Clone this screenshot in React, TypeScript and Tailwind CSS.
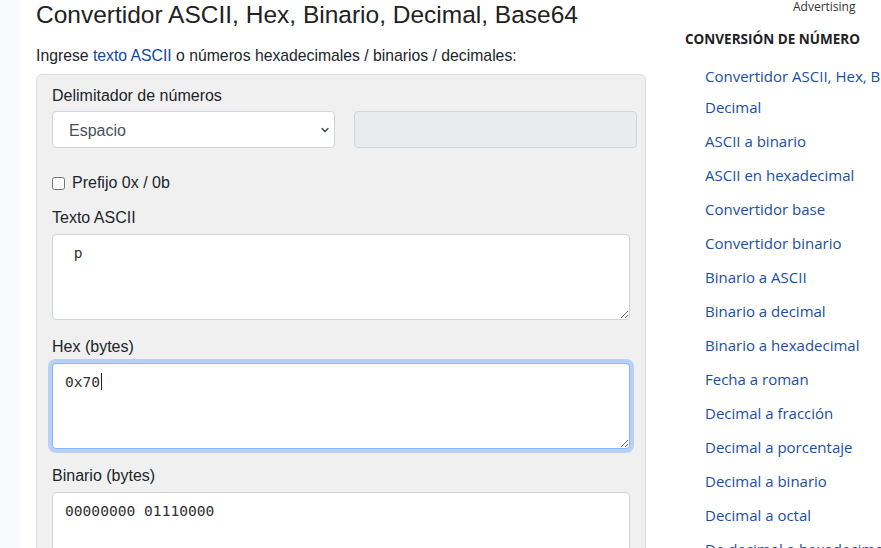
import React from 'react';

const links = [
  'Decimal',
  'ASCII a binario',
  'ASCII en hexadecimal',
  'Convertidor base',
  'Convertidor binario',
  'Binario a ASCII',
  'Binario a decimal',
  'Binario a hexadecimal',
  'Fecha a roman',
  'Decimal a fracción',
  'Decimal a porcentaje',
  'Decimal a binario',
  'Decimal a octal',
  'De decimal a hexadecimal',
];

const mono = "font-['DejaVu_Sans_Mono',monospace] text-[14.6px]";

const Field = ({ label, value, focused }: { label: string; value: string; focused?: boolean }) => (
  <div className="mb-[15px]">
    <label className="block h-[24px] leading-[24px] mb-[4px]">{label}</label>
    <div className="relative">
      <textarea
        readOnly
        defaultValue={value}
        className={
          'block w-full h-[86px] rounded-[4px] bg-white px-[12px] py-[6px] leading-[24px] text-[#333] outline-none resize-y ' +
          mono +
          (focused
            ? ' border border-[#86b7fe] shadow-[0_0_0_4px_rgba(13,110,253,0.25)]'
            : ' border border-[#ced4da]')
        }
      />
      {focused && <span className="absolute left-[49px] top-[10px] w-px h-[17px] bg-[#222]" />}
    </div>
  </div>
);

const App: React.FC = () => {
  return (
    <div className="w-[881px] h-[548px] overflow-hidden flex bg-white text-[#212529] font-['Liberation_Sans',Arial,sans-serif]">
      <div className="w-[20px] shrink-0 bg-[#f8f9fc]" />

      <main className="w-[626px] shrink-0 pl-[16px]">
        <h1 className="text-[24.5px] leading-[29px] font-normal text-[#222]">
          Convertidor ASCII, Hex, Binario, Decimal, Base64
        </h1>
        <p className="mt-[15px] text-[15.75px] leading-[24px]">
          Ingrese <a className="text-[#0d47a1]">texto ASCII</a> o números hexadecimales / binarios / decimales:
        </p>

        <div className="mt-[6px] rounded-[6px] border border-[#dcdcdc] bg-[#f0f0f0] pt-[9px] pl-[15px] pr-[15px] text-[16px]">
          <label className="block h-[24px] leading-[24px] mb-[3px]">Delimitador de números</label>
          <div className="grid grid-cols-2 gap-[19px] mr-[-7px]">
            <div className="relative">
              <select
                defaultValue="Espacio"
                className="block w-full h-[37px] appearance-none rounded-[4px] border border-[#ced4da] bg-white pl-[16px] pt-[3px] text-[16px] text-[#495057] outline-none"
              >
                <option>Espacio</option>
                <option>Coma</option>
                <option>Ninguno</option>
              </select>
              <svg className="pointer-events-none absolute right-[5px] top-[15px]" width="10" height="8" viewBox="0 0 16 16">
                <path d="M2 5l6 6 6-6" fill="none" stroke="#343a40" strokeWidth="2.5" strokeLinecap="round" strokeLinejoin="round" />
              </svg>
            </div>
            <input
              disabled
              className="block w-full h-[37px] rounded-[4px] border border-[#ced4da] bg-[#e9ecef]"
            />
          </div>

          <div className="mt-[23px] mb-[11px] flex items-center h-[24px] gap-[7px]">
            <input type="checkbox" className="w-[13px] h-[13px] m-0" />
            <span>Prefijo 0x / 0b</span>
          </div>

          <Field label="Texto ASCII" value=" p" />
          <Field label="Hex (bytes)" value="0x70" focused />
          <Field label="Binario (bytes)" value="00000000 01110000" />
        </div>
      </main>

      <aside className="ml-[39px] w-[300px] shrink-0 font-['Open_Sans',sans-serif]">
        <div className="pl-[108px] text-[12px] leading-[13px] text-[#333]">Advertising</div>
        <h3 className="mt-[16px] text-[13.5px] leading-[20px] font-bold uppercase text-[#222] whitespace-nowrap">
          Conversión de número
        </h3>
        <ul className="mt-[15px] pl-[20px] text-[15px] text-[#1a4fa3]">
          <li className="h-[31px] leading-[24px] whitespace-nowrap">
            <a>Convertidor ASCII, Hex, Binario, Decimal, Base64</a>
          </li>
          {links.map((l) => (
            <li key={l} className="h-[34px] leading-[24px] whitespace-nowrap">
              <a>{l}</a>
            </li>
          ))}
        </ul>
      </aside>
    </div>
  );
};

export default App;
